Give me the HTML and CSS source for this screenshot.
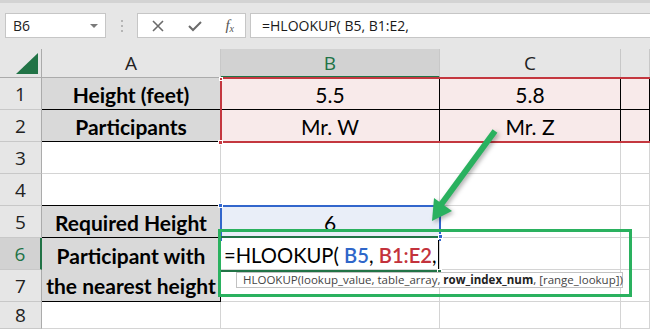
FILE: index.html
```html
<!DOCTYPE html>
<html>
<head>
<meta charset="utf-8">
<link rel="stylesheet" href="styles.css">
</head>
<body>
<div class="app">
  <div class="fbar">
    <div class="namebox"><span>B6</span><span class="dd"></span></div>
    <div class="dots"><i></i><i></i><i></i></div>
    <div class="btns">
      <svg class="ic" width="14" height="14" viewBox="0 0 14 14"><path d="M2 2 L12 12 M12 2 L2 12" stroke="#6b6b6b" stroke-width="1.6" fill="none"/></svg>
      <svg class="ic" width="16" height="14" viewBox="0 0 16 14"><path d="M2 7 L6 11 L14 3" stroke="#6b6b6b" stroke-width="2" fill="none"/></svg>
      <span class="fx">f<sub>x</sub></span>
    </div>
    <div class="finput">=HLOOKUP( B5, B1:E2,</div>
  </div>
  <div class="grid">
    <div class="hd corner"><span class="tri"></span></div>
    <div class="hd col">A</div>
    <div class="hd col sel">B</div>
    <div class="hd col">C</div>
    <div class="hd col"></div>

    <div class="hd row">1</div>
    <div class="c lbl bk">Height (feet)</div>
    <div class="c pk bk">5.5</div>
    <div class="c pk bk">5.8</div>
    <div class="c pk bk"></div>

    <div class="hd row">2</div>
    <div class="c lbl bk">Participants</div>
    <div class="c pk bk">Mr. W</div>
    <div class="c pk bk">Mr. Z</div>
    <div class="c pk bk"></div>

    <div class="hd row">3</div>
    <div class="c"></div><div class="c"></div><div class="c"></div><div class="c"></div>

    <div class="hd row">4</div>
    <div class="c bb"></div><div class="c"></div><div class="c"></div><div class="c"></div>

    <div class="hd row">5</div>
    <div class="c lbl bk">Required Height</div>
    <div class="c bl">6</div>
    <div class="c"></div><div class="c"></div>

    <div class="hd row sel">6</div>
    <div class="c lbl bk merged">Participant with<br>the nearest height</div>
    <div class="c edit"><span class="etext">=HLOOKUP( <span class="rb">B5</span>, <span class="rr">B1:E2</span>,<span class="caret"></span></span></div>
    <div class="c"></div><div class="c"></div>

    <div class="hd row">7</div>
    <div class="c"></div><div class="c"></div><div class="c"></div>

    <div class="hd row">8</div>
    <div class="c"></div><div class="c"></div><div class="c"></div><div class="c"></div>
  </div>

  <div class="rng-red"></div>
  <span class="h h-red1"></span><span class="h h-red2"></span>
  <div class="rng-blue"></div>
  <span class="h h-blue1"></span><span class="h h-blue2"></span>
  <div class="active"></div>
  <span class="h h-grn"></span>
  <div class="tip">HLOOKUP(lookup_value, table_array, <b>row_index_num</b>, [range_lookup])</div>
  <div class="anno"></div>
  <svg class="arrow" width="650" height="329" viewBox="0 0 650 329">
    <g class="arr">
      <line x1="495" y1="131" x2="440" y2="206" stroke="#2ab15f" stroke-width="6"/>
      <polygon points="432,221 434,198 452,211" fill="#2ab15f"/>
    </g>
  </svg>
</div>
</body>
</html>
```

FILE: styles.css
```css
* { box-sizing: border-box; }
html, body { margin: 0; padding: 0; }
body { width: 650px; height: 329px; overflow: hidden; background: #fff; }
.app { position: relative; width: 650px; height: 329px; overflow: hidden; background: #fff; }

.fbar {
  height: 49px;
  background: #e6e6e6;
  border-top: 3px solid #d3d3d3;
  display: flex;
  align-items: flex-start;
  padding-top: 10px;
  padding-left: 5px;
  font-family: "Open Sans", "Noto Sans", sans-serif;
  font-size: 14px;
  color: #222;
}
.namebox {
  width: 101px; height: 25px;
  background: #fff; border: 1px solid #c6c6c6;
  display: flex; align-items: center; justify-content: space-between;
  padding: 0 7px 0 7px;
}
.dd { width: 0; height: 0; border-left: 4px solid transparent; border-right: 4px solid transparent; border-top: 4px solid #7a7a7a; }
.dots { width: 31px; height: 25px; display: flex; flex-direction: column; align-items: center; justify-content: center; gap: 3px; }
.dots i { width: 2px; height: 2px; background: #b5b5b5; display: block; }
.btns {
  width: 109px; height: 25px; background: #fff; border: 1px solid #c6c6c6;
  display: flex; align-items: center; justify-content: space-between; padding: 0 11px 0 13px;
}
.fx { font-family: "Liberation Serif", serif; font-style: italic; font-size: 15px; color: #555; line-height: 1; }
.fx sub { font-size: 10px; vertical-align: -2px; }
.finput {
  margin-left: 4px; flex: 1; height: 25px; background: #fff; border: 1px solid #c6c6c6; border-right: 0;
  padding-left: 11px; line-height: 23px; color: #1a1a1a;
}

.grid {
  display: grid;
  grid-template-columns: 42px 179px 219px 181px 29px;
  grid-template-rows: 29px 32px 32px 32px 32px 32px 32px 32px 27px;
  font-family: "Lato", "Open Sans", sans-serif;
}
.hd {
  background: #e6e6e6;
  font-family: "Open Sans", "Noto Sans", sans-serif;
  font-size: 19px; color: #222;
  display: flex; align-items: center; justify-content: center;
  border-right: 1px solid #ababab; border-bottom: 1px solid #ababab;
}
.hd.col { border-right: 1px solid #c8c8c8; border-bottom: 1px solid #ababab; }
.hd.row { border-bottom: 1px solid #c8c8c8; }
.hd.sel { background: #d2d2d2; color: #217346; }
.hd.col.sel { border-bottom: 2px solid #217346; }
.hd.row.sel { border-right: 2px solid #217346; }
.corner { position: relative; }
.tri { position: absolute; right: 3px; bottom: 3px; width: 0; height: 0; border-left: 22px solid transparent; border-bottom: 21px solid #217346; }

.c {
  border-right: 1px solid #d4d4d4; border-bottom: 1px solid #d4d4d4;
  display: flex; align-items: center; justify-content: center;
  font-size: 21px; color: #000; white-space: nowrap; overflow: hidden;
  padding-top: 2px;
}
.c.bk { border-right-color: #000; border-bottom-color: #000; }
.c.bb { border-bottom-color: #000; }
.lbl { background: #d9d9d9; font-weight: 700; }
.pk { background: #f8eaea; }
.bl { background: #e9eef8; }
.merged { grid-row: span 2; flex-direction: column; text-align: center; line-height: 30px; padding-top: 2px; }
.edit { justify-content: flex-start; padding-left: 3px; background: #fff; position: relative; overflow: visible; font-size: 20.2px; }
.etext { white-space: pre; display: flex; align-items: center; }
.rb { color: #2f66c9; font-weight: 600; }
.rr { color: #c3323c; font-weight: 600; }
.caret { display: inline-block; width: 1px; height: 29px; background: #000; margin-left: 1px; }

.rng-red { position: absolute; left: 220px; top: 77px; width: 440px; height: 66px; border: 2px solid #c4373f; }
.rng-blue { position: absolute; left: 220px; top: 205px; width: 221px; height: 36px; border: 2px solid #3266cc; border-bottom: 0; }
.active { position: absolute; left: 221px; top: 236px; width: 217px; height: 36px; border-top: 2px solid #217346; border-bottom: 2px solid #217346; }
.h { position: absolute; width: 5px; height: 5px; border: 1px solid #fff; }
.h-red1 { left: 219px; top: 77px; background: #c4373f; width: 4px; height: 4px; }
.h-red2 { left: 218px; top: 140px; background: #c4373f; }
.h-blue1 { left: 218px; top: 203px; background: #3266cc; }
.h-blue2 { left: 438px; top: 234px; background: #3266cc; }
.h-grn { left: 437px; top: 269px; background: #217346; }

.tip {
  position: absolute; left: 236px; top: 272px; width: 387px; height: 16px;
  background: #fff; border: 1px solid #c2c2c2;
  font-family: "Open Sans", "Noto Sans", sans-serif; font-size: 11.5px; line-height: 14px;
  color: #444; padding-left: 6px; white-space: nowrap;
}
.tip b { color: #222; }
.anno { position: absolute; left: 218px; top: 229px; width: 414px; height: 68px; border: 3px solid #2ab15f; }
.arrow { position: absolute; left: 0; top: 0; }
.arr { filter: drop-shadow(2px 2px 2px rgba(0,0,0,0.3)); }
```
